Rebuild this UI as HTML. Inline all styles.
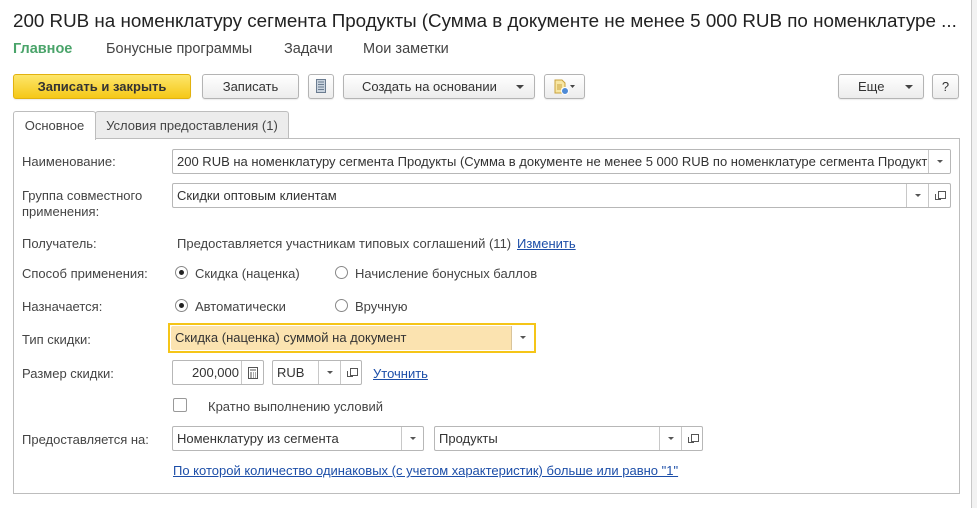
<!DOCTYPE html>
<html><head><meta charset="utf-8"><style>
*{box-sizing:border-box;margin:0;padding:0}
body{width:977px;height:508px;background:#fff;font-family:"Liberation Sans",Arial,sans-serif;font-size:13px;color:#333;position:relative;overflow:hidden}
.a{position:absolute;white-space:nowrap}
.btn{position:absolute;height:25px;border:1px solid #b4b4b4;border-radius:3px;background:linear-gradient(#fff,#ececec);text-align:center;line-height:23px;color:#333;box-shadow:0 1px 1px rgba(0,0,0,.08)}
.fld{position:absolute;height:25px;border:1px solid #b7b7b7;border-radius:2px;background:#fff;line-height:23px;padding-left:4px;color:#333;overflow:hidden;white-space:nowrap}
.dd{position:absolute;top:0;width:22px;height:23px;border-left:1px solid #c8c8c8}
.dd:after{content:"";position:absolute;left:8px;top:10px;border-left:3px solid transparent;border-right:3px solid transparent;border-top:3px solid #555}
.op{position:absolute;top:0;width:22px;height:23px;border-left:1px solid #c8c8c8}
.op:before{content:"";position:absolute;left:9px;top:7px;width:6px;height:6px;border:1px solid #555;background:#fff}
.op:after{content:"";position:absolute;left:6px;top:10px;width:5px;height:5px;border-left:1px solid #555;border-bottom:1px solid #555}
.lbl{position:absolute;color:#444;white-space:nowrap}
.rad{position:absolute;width:13px;height:13px;border:1px solid #888;border-radius:50%;background:#fff}
.rad.on:after{content:"";position:absolute;left:3px;top:3px;width:5px;height:5px;border-radius:50%;background:#222}
.lnk{position:absolute;color:#1c4ea8;text-decoration:underline;white-space:nowrap}
.arr{display:inline-block;border-left:4px solid transparent;border-right:4px solid transparent;border-top:4px solid #444;vertical-align:middle}
</style></head><body>
<div class="a" style="left:971px;top:0;width:6px;height:508px;background:#f2f2f2;border-left:1px solid #c8c8c8"></div>
<div class="a" style="left:13px;top:10px;font-size:18.8px;color:#222">200 RUB на номенклатуру сегмента Продукты (Сумма в документе не менее 5 000 RUB по номенклатуре ...</div>
<div class="a" style="left:13px;top:41px;font-size:14.5px;color:#4aa46a;font-weight:bold">Главное</div>
<div class="a" style="left:106px;top:41px;font-size:14.5px;color:#444">Бонусные программы</div>
<div class="a" style="left:284px;top:41px;font-size:14.5px;color:#444">Задачи</div>
<div class="a" style="left:363px;top:41px;font-size:14.5px;color:#444">Мои заметки</div>

<div class="btn" style="left:13px;top:74px;width:178px;background:linear-gradient(#fde66b,#f5c817);border-color:#e2b20f;font-weight:bold;color:#333">Записать и закрыть</div>
<div class="btn" style="left:202px;top:74px;width:97px">Записать</div>
<div class="btn" style="left:308px;top:74px;width:26px"><svg width="10" height="14" style="margin-top:4px" viewBox="0 0 10 14"><rect x="0.5" y="0.5" width="9" height="13" fill="#c9d3de" stroke="#6b7c90"/><path d="M2 3h6M2 5.5h6M2 8h6M2 10.5h6" stroke="#6b7c90"/></svg></div>
<div class="btn" style="left:343px;top:74px;width:192px;text-align:left;padding-left:18px">Создать на основании<span class="arr" style="position:absolute;right:10px;top:10px"></span></div>
<div class="btn" style="left:544px;top:74px;width:41px"><svg width="24" height="16" style="margin-top:4px" viewBox="0 0 24 16"><path d="M2 1h7l3 3v10H2z" fill="#f7e6a3" stroke="#c9a23c"/><path d="M4 6h5M4 8h5M4 10h4" stroke="#c9a23c"/><circle cx="12" cy="12" r="3.5" fill="#4e8ad6" stroke="#fff"/><path d="M17 6h5l-2.5 3z" fill="#444"/></svg></div>
<div class="btn" style="left:838px;top:74px;width:86px;text-align:left;padding-left:19px">Еще<span class="arr" style="position:absolute;right:10px;top:10px"></span></div>
<div class="btn" style="left:932px;top:74px;width:27px">?</div>

<div class="a" style="left:95px;top:111px;width:194px;height:28px;background:#ececec;border:1px solid #bdbdbd;border-bottom:none;border-radius:3px 3px 0 0;text-align:center;line-height:27px;color:#444">Условия предоставления (1)</div>
<div class="a" style="left:13px;top:138px;width:947px;height:356px;border:1px solid #bdbdbd"></div>
<div class="a" style="left:13px;top:111px;width:83px;height:29px;background:#fff;border:1px solid #bdbdbd;border-bottom:none;border-radius:3px 3px 0 0;text-align:center;line-height:28px;color:#444">Основное</div>

<div class="lbl" style="left:22px;top:154px">Наименование:</div>
<div class="fld" style="left:172px;top:149px;width:779px;padding-right:24px">200 RUB на номенклатуру сегмента Продукты (Сумма в документе не менее 5 000 RUB по номенклатуре сегмента Продукты)<div class="dd" style="right:0;background:#fff"></div></div>

<div class="lbl" style="left:22px;top:188px;line-height:16px">Группа совместного<br>применения:</div>
<div class="fld" style="left:172px;top:183px;width:779px">Скидки оптовым клиентам<div class="dd" style="right:22px"></div><div class="op" style="right:0"></div></div>

<div class="lbl" style="left:22px;top:236px">Получатель:</div>
<div class="a" style="left:177px;top:236px;color:#444">Предоставляется участникам типовых соглашений (11)</div>
<div class="lnk" style="left:517px;top:236px">Изменить</div>

<div class="lbl" style="left:22px;top:266px">Способ применения:</div>
<div class="rad on" style="left:175px;top:266px"></div><div class="a" style="left:195px;top:266px;color:#444">Скидка (наценка)</div>
<div class="rad" style="left:335px;top:266px"></div><div class="a" style="left:355px;top:266px;color:#444">Начисление бонусных баллов</div>

<div class="lbl" style="left:22px;top:299px">Назначается:</div>
<div class="rad on" style="left:175px;top:299px"></div><div class="a" style="left:195px;top:299px;color:#444">Автоматически</div>
<div class="rad" style="left:335px;top:299px"></div><div class="a" style="left:355px;top:299px;color:#444">Вручную</div>

<div class="lbl" style="left:22px;top:332px">Тип скидки:</div>
<div class="a" style="left:168px;top:323px;width:368px;height:30px;border:2px solid #f5c518"></div>
<div class="fld" style="left:171px;top:326px;width:362px;height:24px;border:none;background:#fbe3b0;line-height:24px;color:#333">Скидка (наценка) суммой на документ<div class="dd" style="right:0;height:24px;border-left:1px solid #d9c49a;background:#fff"></div></div>

<div class="lbl" style="left:22px;top:366px">Размер скидки:</div>
<div class="fld" style="left:172px;top:360px;width:92px;text-align:right;padding-right:24px">200,000<div class="a" style="right:0;top:0;width:22px;height:23px;border-left:1px solid #c8c8c8"><svg width="10" height="12" style="position:absolute;left:6px;top:6px" viewBox="0 0 10 12"><rect x="0.5" y="0.5" width="9" height="11" fill="none" stroke="#555"/><path d="M2 3h6M2 6h2M5 6h1M7 6h1M2 8h2M5 8h1M7 8h1M2 10h2M5 10h1M7 10h1" stroke="#555"/></svg></div></div>
<div class="fld" style="left:272px;top:360px;width:90px">RUB<div class="dd" style="right:21px"></div><div class="op" style="right:0;width:21px"></div></div>
<div class="lnk" style="left:373px;top:366px">Уточнить</div>

<div class="a" style="left:173px;top:398px;width:14px;height:14px;border:1px solid #999;border-radius:2px"></div>
<div class="a" style="left:208px;top:399px;color:#444">Кратно выполнению условий</div>

<div class="lbl" style="left:22px;top:432px">Предоставляется на:</div>
<div class="fld" style="left:172px;top:426px;width:252px">Номенклатуру из сегмента<div class="dd" style="right:0"></div></div>
<div class="fld" style="left:434px;top:426px;width:269px">Продукты<div class="dd" style="right:21px"></div><div class="op" style="right:0;width:21px"></div></div>
<div class="lnk" style="left:173px;top:463px">По которой количество одинаковых (с учетом характеристик) больше или равно "1"</div>
</body></html>
